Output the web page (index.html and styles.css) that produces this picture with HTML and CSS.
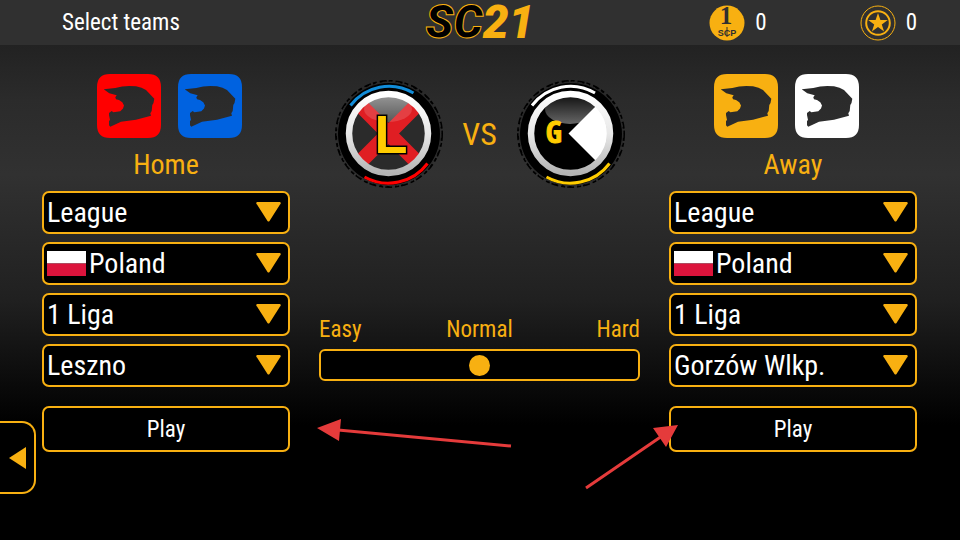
FILE: index.html
```html
<!DOCTYPE html>
<html lang="en">
<head>
    <meta charset="UTF-8">
    <meta name="viewport" content="width=device-width, initial-scale=1.0">
    <title>Select teams</title>
    <link rel="stylesheet" href="styles.css">
</head>
<body>
    <!-- Shared shapes -->
    <svg class="sprite" aria-hidden="true">
        <symbol id="kit" viewBox="0 0 64 64">
            <path fill-rule="evenodd" d="M13 0H51Q64 0 64 13V51Q64 64 51 64H13Q0 64 0 51V13Q0 0 13 0Z M6.700 15.300L18.300 13.900Q25 12 32.300 12L39 12.300Q45 13.500 49 16L57.300 24.700L56.500 29L55.300 31L54.700 37L53.300 39.300L54 41.700L39 45.700L24 47.700L13.300 52.700L12 51.300V47L13 46L12 41V39L14.700 37L16.300 38.300L23.300 37.300L26 34.500L27 31.500L25.300 28.300L22 26L19 25.300L18.300 23.300L19.700 21.300L12.300 19.300Z"/>
        </symbol>
        <symbol id="triangle" viewBox="0 0 25 20">
            <path d="M1 0H24Q25.500 1 24 2.500L13.500 19Q12.500 20 11.500 19L1 2.500Q-.5 1 1 0Z"/>
        </symbol>
        <symbol id="flag-pl" viewBox="0 0 39 25">
            <path fill="#fff" d="M0 0h39v12.500H0z"/>
            <path fill="#dc143c" d="M0 12.500h39V25H0z"/>
        </symbol>
        <defs>
            <linearGradient id="rim" x1="0" y1="0" x2="0" y2="1">
                <stop offset="0" stop-color="#fff"/>
                <stop offset=".5" stop-color="#e8e8e8"/>
                <stop offset="1" stop-color="#b4b4b4"/>
            </linearGradient>
            <linearGradient id="gloss" x1="0" y1="0" x2="0" y2="1">
                <stop offset="0" stop-color="#fff" stop-opacity=".05"/>
                <stop offset="1" stop-color="#fff" stop-opacity=".4"/>
            </linearGradient>
            <linearGradient id="shade" x1="0" y1="0" x2="0" y2="1">
                <stop offset="0" stop-color="#888"/>
                <stop offset="1" stop-color="#2b2b2b"/>
            </linearGradient>
            <clipPath id="disc"><circle cx="53.500" cy="53.500" r="37"/></clipPath>
        </defs>
    </svg>

    <header class="topbar">
        <h1>Select teams</h1>
        <div class="logo"><span>SC</span>21</div>
        <div class="wallet">
            <div class="coin">
                <svg width="36" height="36" viewBox="0 0 36 36" aria-hidden="true">
                    <circle cx="18" cy="18" r="17.500" fill="#f8b011"/>
                    <text class="coin-one" x="17" y="19">1</text>
                    <text class="coin-scp" x="18" y="31">SCP</text>
                    <path d="M18 22v10" stroke="#303030"/>
                </svg>
                <span>0</span>
            </div>
            <div class="coin">
                <svg width="36" height="36" viewBox="0 0 36 36" fill="none" stroke="#f8b011" aria-hidden="true">
                    <circle cx="18" cy="18" r="17"/>
                    <circle cx="18" cy="18" r="11.800" stroke-width="2"/>
                    <path fill="#f8b011" stroke="none" d="M18 8l2.400 7.100h7.400l-6 4.300 2.300 7.100-6.100-4.400-6.100 4.400 2.300-7.100-6-4.300h7.400z"/>
                </svg>
                <span>0</span>
            </div>
        </div>
    </header>

    <main class="match">
        <section class="team home">
            <div class="kits">
                <button class="kit red" aria-label="Red helmet"><svg><use href="#kit"/></svg></button>
                <button class="kit blue" aria-label="Blue helmet"><svg><use href="#kit"/></svg></button>
            </div>
            <h2>Home</h2>
            <div class="fields">
                <div class="field">
                    <select aria-label="Home competition"><option>League</option></select>
                    <svg class="arrow"><use href="#triangle"/></svg>
                </div>
                <div class="field">
                    <svg class="flag"><use href="#flag-pl"/></svg>
                    <select aria-label="Home country"><option>Poland</option></select>
                    <svg class="arrow"><use href="#triangle"/></svg>
                </div>
                <div class="field">
                    <select aria-label="Home division"><option>1 Liga</option></select>
                    <svg class="arrow"><use href="#triangle"/></svg>
                </div>
                <div class="field">
                    <select aria-label="Home team"><option>Leszno</option></select>
                    <svg class="arrow"><use href="#triangle"/></svg>
                </div>
            </div>
            <button class="play">Play</button>
        </section>

        <section class="versus">
            <div class="badges">
                <svg class="badge" viewBox="0 0 108 108" role="img" aria-label="Leszno">
                    <circle cx="54" cy="54" r="51" fill="#000"/>
                    <circle class="tread" cx="54" cy="54" r="53"/>
                    <circle class="tread-inner" cx="54" cy="54" r="52"/>
                    <path d="M15.500 25.500A48 48 0 0 1 78.500 13" fill="none" stroke="#118cd8" stroke-width="3"/>
                    <path d="M29.500 97A49 49 0 0 0 92.500 83.500" fill="none" stroke="#f00" stroke-width="3"/>
                    <circle cx="53.500" cy="53.500" r="37" fill="#2b2b2b"/>
                    <g clip-path="url(#disc)">
                        <ellipse cx="53" cy="31" rx="24" ry="17" fill="url(#shade)"/>
                        <path d="M14 14L93 93M93 14L14 93" stroke="#e01e23" stroke-width="15"/>
                        <ellipse cx="53" cy="29" rx="24" ry="13" fill="#fff" opacity=".15"/>
                    </g>
                    <circle cx="53.500" cy="53.500" r="39.500" fill="none" stroke="url(#rim)" stroke-width="6.500"/>
                    <text class="letter-l" x="56" y="73">L</text>
                </svg>
                <span class="vs">VS</span>
                <svg class="badge" viewBox="0 0 108 108" role="img" aria-label="Gorzów Wlkp.">
                    <circle cx="54" cy="54" r="51" fill="#000"/>
                    <circle class="tread" cx="54" cy="54" r="53"/>
                    <circle class="tread-inner" cx="54" cy="54" r="52"/>
                    <path d="M15 25.500A48 48 0 0 1 78 13" fill="none" stroke="#fff" stroke-width="3"/>
                    <path d="M29.500 97A49 49 0 0 0 92.500 83.500" fill="none" stroke="#fc0" stroke-width="3"/>
                    <g clip-path="url(#disc)">
                        <ellipse cx="53" cy="29" rx="25" ry="15" fill="url(#gloss)"/>
                        <path d="M51.500 53.500L91 14V93Z" fill="#fff"/>
                    </g>
                    <circle cx="53.500" cy="53.500" r="39.500" fill="none" stroke="url(#rim)" stroke-width="6.500"/>
                    <text class="letter-g" x="37" y="63">G</text>
                </svg>
            </div>

            <div class="difficulty">
                <div class="levels">
                    <span>Easy</span>
                    <label for="difficulty">Normal</label>
                    <span>Hard</span>
                </div>
                <input type="range" id="difficulty" min="0" max="2" value="1">
            </div>

            <svg class="pointers" width="370" height="80" viewBox="315 415 370 80" aria-hidden="true">
                <path d="M511 446L338 430M586 488L662 436" stroke="#e53b3b" stroke-width="3"/>
                <path d="M317 428L341 419L339 441ZM678 425L653 428L666 447Z" fill="#e53b3b"/>
            </svg>
        </section>

        <section class="team away">
            <div class="kits">
                <button class="kit yellow" aria-label="Yellow helmet"><svg><use href="#kit"/></svg></button>
                <button class="kit white" aria-label="White helmet"><svg><use href="#kit"/></svg></button>
            </div>
            <h2>Away</h2>
            <div class="fields">
                <div class="field">
                    <select aria-label="Away competition"><option>League</option></select>
                    <svg class="arrow"><use href="#triangle"/></svg>
                </div>
                <div class="field">
                    <svg class="flag"><use href="#flag-pl"/></svg>
                    <select aria-label="Away country"><option>Poland</option></select>
                    <svg class="arrow"><use href="#triangle"/></svg>
                </div>
                <div class="field">
                    <select aria-label="Away division"><option>1 Liga</option></select>
                    <svg class="arrow"><use href="#triangle"/></svg>
                </div>
                <div class="field">
                    <select aria-label="Away team"><option>Gorzów Wlkp.</option></select>
                    <svg class="arrow"><use href="#triangle"/></svg>
                </div>
            </div>
            <button class="play">Play</button>
        </section>
    </main>

    <button class="back" aria-label="Back">
        <svg width="17" height="22" viewBox="0 0 17 22"><path fill="#f8b011" d="M17 0V22L0 11Z"/></svg>
    </button>
</body>
</html>
```
FILE: styles.css
```css
* {
    margin: 0;
    padding: 0;
    box-sizing: border-box;
}

body {
    position: relative;
    min-height: 100vh;
    background: linear-gradient(#222 45px, #2b2b2b 100px, #313131 175px, #202020 300px, #0a0a0a 385px, #000 425px);
    color: #fff;
    font-family: 'Roboto Condensed', 'Liberation Sans Narrow', sans-serif;
    font-size: 23px;
}

button,
select {
    font: inherit;
    color: inherit;
    border: none;
    background: none;
    cursor: pointer;
}

.sprite {
    position: absolute;
    width: 0;
    height: 0;
}

/* Top bar */
.topbar {
    display: grid;
    grid-template-columns: 1fr auto 1fr;
    align-items: center;
    height: 45px;
    padding: 0 43px;
    background: #303030;
}

.topbar h1 {
    padding-left: 19px;
    font-size: 23px;
    font-weight: normal;
}

.logo {
    font: italic 900 46px/45px Roboto, 'Liberation Sans', sans-serif;
    color: #f8b011;
}

.logo span {
    color: #000;
    -webkit-text-stroke: 1px #f8b011;
}

.wallet {
    display: flex;
    justify-content: flex-end;
    gap: 93px;
}

.coin {
    display: flex;
    align-items: center;
    gap: 10px;
}

.coin-one {
    font: bold 25px 'Liberation Serif', serif;
    fill: #303030;
    text-anchor: middle;
}

.coin-scp {
    font: bold 9px 'Liberation Sans', sans-serif;
    fill: #303030;
    text-anchor: middle;
}

/* Match setup */
.match {
    display: grid;
    grid-template-columns: 248fr 321fr 248fr;
    gap: 29px;
    padding: 29px 43px 40px 42px;
}

.kits {
    display: flex;
    justify-content: center;
    gap: 17px;
}

.home .kits {
    padding-left: 6px;
}

.away .kits {
    padding-right: 14px;
}

.kit,
.kit svg {
    display: block;
    width: 64px;
    height: 64px;
}

.red {
    fill: #f00;
}

.blue {
    fill: #0062e0;
}

.yellow {
    fill: #f8b011;
}

.white {
    fill: #fff;
}

.team h2 {
    font-size: 28px;
    font-weight: normal;
    line-height: 53px;
    text-align: center;
    color: #f8b011;
}

.fields {
    display: grid;
    gap: 8px;
}

.field {
    position: relative;
    display: flex;
    align-items: center;
    gap: 3px;
    height: 43px;
    padding-left: 3px;
    border: 2px solid #f8b011;
    border-radius: 7px;
    background: #000;
}

.field select {
    flex: 1;
    min-width: 0;
    height: 39px;
    font-size: 28px;
    appearance: none;
    outline: none;
}

.flag {
    width: 39px;
    height: 25px;
}

.arrow {
    position: absolute;
    right: 7px;
    top: 9px;
    width: 25px;
    height: 20px;
    fill: #f8b011;
    pointer-events: none;
}

.play {
    display: block;
    width: 100%;
    height: 46px;
    margin-top: 19px;
    border: 2px solid #f8b011;
    border-radius: 7px;
    background: #000;
}

/* Badges */
.versus {
    position: relative;
    padding-top: 6px;
}

.badges {
    display: flex;
    justify-content: center;
    align-items: center;
}

.badge {
    width: 108px;
    height: 108px;
}

.tread {
    fill: none;
    stroke: #000;
    stroke-width: 2;
    stroke-dasharray: 7 2 4 3;
}

.tread-inner {
    fill: none;
    stroke: #2b2b2b;
    stroke-dasharray: 4 3;
}

.letter-l {
    font: bold 54px 'Liberation Sans', sans-serif;
    fill: #fc0;
    stroke: #000;
    stroke-width: 3;
    paint-order: stroke;
    text-anchor: middle;
}

.letter-g {
    font: bold 30px 'Open Sans Condensed', sans-serif;
    fill: #fc0;
    stroke: #fc0;
    text-anchor: middle;
}

.vs {
    width: 74px;
    font-size: 32px;
    text-align: center;
    color: #f8b011;
}

/* Difficulty slider */
.difficulty {
    margin-top: 128px;
    color: #f8b011;
}

.levels {
    display: grid;
    grid-template-columns: 1fr auto 1fr;
    line-height: 28px;
    margin-bottom: 5px;
}

.levels span:last-child {
    text-align: right;
}

.difficulty input {
    display: block;
    width: 100%;
    height: 32px;
    border: 2px solid #f8b011;
    border-radius: 6px;
    background: #000;
    appearance: none;
}

.difficulty input::-webkit-slider-thumb {
    width: 21px;
    height: 21px;
    border-radius: 50%;
    background: #f8b011;
    appearance: none;
}

.pointers {
    position: absolute;
    left: -4px;
    top: 341px;
}

.back {
    position: absolute;
    left: 0;
    top: 421px;
    display: flex;
    align-items: center;
    width: 36px;
    height: 73px;
    padding-left: 9px;
    border: 2px solid #f8b011;
    border-left: none;
    border-radius: 0 14px 14px 0;
    background: #000;
}
```
